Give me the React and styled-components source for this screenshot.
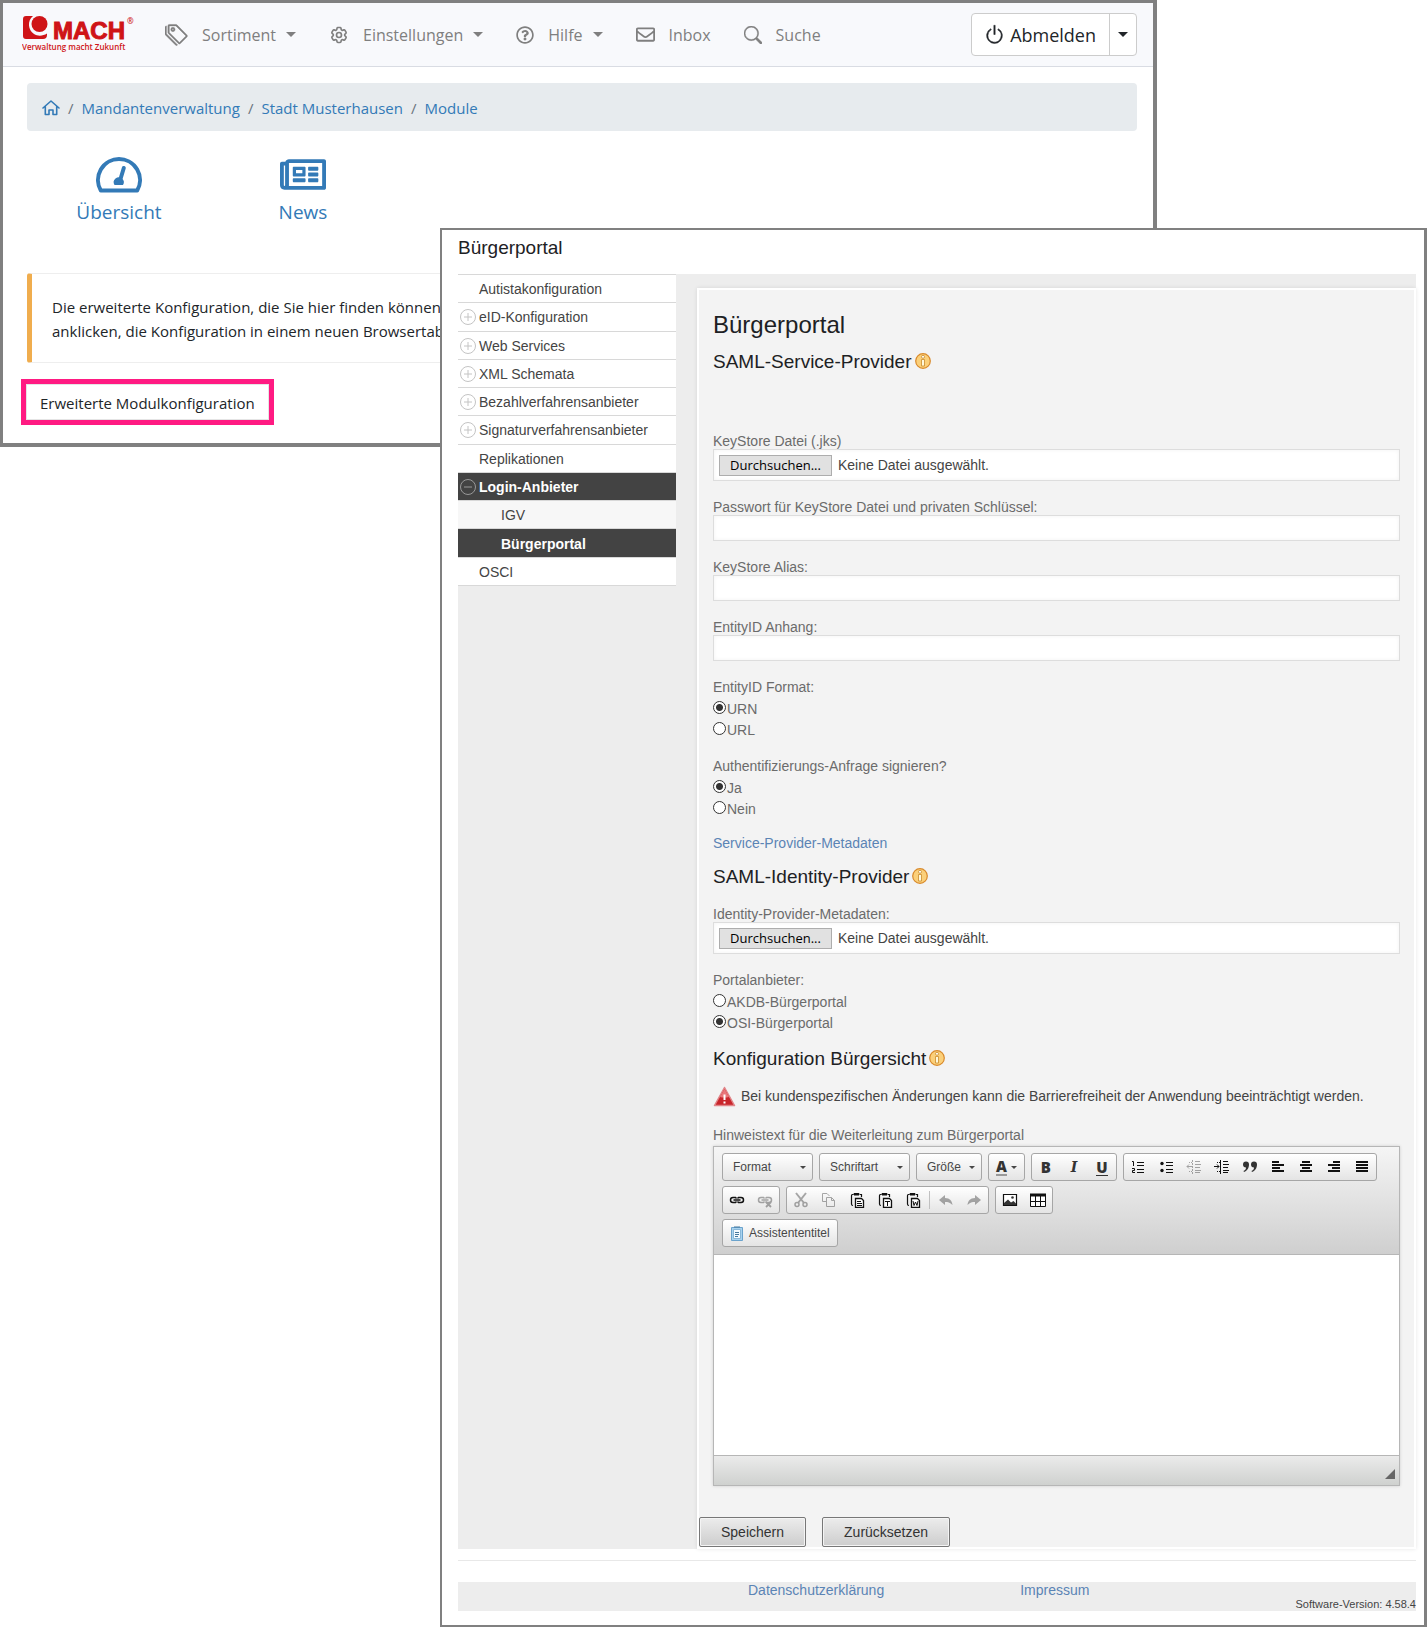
import React, { useRef, useState } from "react";
import styled, { createGlobalStyle, css } from "styled-components";
import { BsPower, BsSearch, BsTags } from "react-icons/bs";
import { FaRegEnvelope, FaRegNewspaper, FaRegQuestionCircle } from "react-icons/fa";
import { HiOutlineCog6Tooth } from "react-icons/hi2";

const uiFont = '"Open Sans", "Noto Sans", sans-serif';
const formFont = '"Liberation Sans", Arial, sans-serif';

const GlobalStyle = createGlobalStyle`
  *, *::before, *::after {
    box-sizing: border-box;
  }

  body {
    margin: 0;
    background: #fff;
  }

  button, input, select, textarea {
    font: inherit;
    color: inherit;
  }

  a {
    text-decoration: none;
  }
`;

const Desktop = styled.main`
  display: grid;
  grid-template-columns: 440px 1fr 270px 1px;
  grid-template-rows: 228px 219px auto;
`;

/* ---------- portal window ---------- */

const PortalWindow = styled.section`
  grid-column: 1 / 3;
  grid-row: 1 / 3;
  border: 3px solid #808080;
  border-right-width: 4px;
  border-bottom-width: 4px;
  background: #fff;
  color: #212529;
  font: 15px/24px ${uiFont};
  overflow: hidden;
`;

const Navbar = styled.header`
  display: flex;
  align-items: center;
  height: 64px;
  padding: 0 16px 0 19px;
  border-bottom: 1px solid #d9dce3;
  background: #f8f9fc;
`;

const NavList = styled.nav`
  display: flex;
  flex: 1;
  gap: 33px;
  margin-left: 29px;
`;

const NavLink = styled.a`
  display: flex;
  align-items: center;
  color: #7f7f7f;
  font-size: 16px;
  line-height: 24px;
  white-space: nowrap;

  > svg:first-child {
    flex: none;
    margin-right: 14px;
  }
`;

const Caret = styled.span`
  width: 10px;
  margin-left: 10px;
  border: 5px solid transparent;
  border-top-color: currentColor;
  border-bottom: 0;
`;

const LogoutGroup = styled.div`
  display: flex;
  height: 43px;
  border: 1px solid #ccc;
  border-radius: 4px;
  background: #fff;
`;

const LogoutButton = styled.button`
  display: flex;
  align-items: center;
  gap: 5px;
  padding: 0 13px 0 12px;
  border: 0;
  background: none;
  font-size: 18px;

  & + & {
    padding: 0 8px;
    border-left: 1px solid #ccc;
  }

  & + & ${Caret} {
    margin: 0;
  }
`;

const PortalBody = styled.div`
  padding: 16px 16px 0 24px;
`;

const Breadcrumb = styled.nav`
  display: flex;
  align-items: center;
  gap: 8px;
  height: 48px;
  padding: 2px 15px 0;
  border-radius: 4px;
  background: #e7ebee;
  color: #6c757d;

  a {
    display: flex;
    color: #337ab7;
  }
`;

const Tiles = styled.div`
  display: flex;
  margin: 26px 0 47px;
`;

const Tile = styled.a`
  display: flex;
  flex-direction: column;
  align-items: center;
  gap: 6px;
  width: 184px;
  color: #337ab7;
  font-size: 19px;
  line-height: 27px;

  svg {
    width: 46px;
    height: 41px;
    margin: -3px 0 -2px;
  }
`;

const Callout = styled.p`
  margin: 0 0 21px;
  padding: 21px 20px 19px;
  border: 1px solid #eee;
  border-left: 5px solid #f0ad4e;
  border-radius: 3px;
  white-space: nowrap;
`;

const ModuleButton = styled.button`
  height: 36px;
  margin-left: -1px;
  padding: 2px 13px 0;
  border: 1px solid #e4e4e4;
  background: #fff;
  outline: 5px solid #ff1a82;
`;

/* ---------- configuration window ---------- */

const ConfigWindow = styled.section`
  grid-column: 2 / 4;
  grid-row: 2 / 4;
  padding: 6px 8px 14px 16px;
  border: 2px solid #808080;
  border-right-width: 3px;
  border-bottom-width: 3px;
  background: #fff;
  color: #6b6b6b;
  font: 14px/16px ${formFont};
`;

const WindowTitle = styled.h1`
  margin: 0 0 14px;
  color: #1d2124;
  font-size: 19px;
  font-weight: 400;
  line-height: 24px;
`;

const Workspace = styled.div`
  display: flex;
  align-items: stretch;
  background: #ededed;
`;

const SideList = styled.ul`
  display: grid;
  grid-auto-rows: 1fr;
  flex: none;
  align-self: flex-start;
  width: 218px;
  height: 312px;
  margin: 0 21px 0 0;
  padding: 0;
  border-top: 1px solid #d8d8d8;
  list-style: none;
`;

const SideItem = styled.li`
  display: flex;
  border-bottom: 1px solid #d8d8d8;
  background: ${({ $active, $child }) => ($active ? "#434343" : $child ? "#f7f7f7" : "#fff")};
`;

const SideLink = styled.a`
  display: flex;
  flex: 1;
  align-items: center;
  gap: 3px;
  padding-top: 1px;
  padding-left: ${({ $child, $toggle }) => ($child ? 43 : $toggle ? 2 : 21)}px;
  color: ${({ $active }) => ($active ? "#fff" : "#444")};
  font-weight: ${({ $active }) => ($active ? 700 : 400)};
`;

const Panel = styled.form`
  flex: 1;
  min-width: 0;
  border: 2px solid #fff;
  margin-top: 14px;
  background: #f3f3f3;
  box-shadow: 0 0 4px rgba(0, 0, 0, 0.1);
`;

const PanelBody = styled.div`
  padding: 20px 14px 0;
`;

const PageHeading = styled.h2`
  margin: 0;
  color: #1d2124;
  font-size: 24px;
  font-weight: 400;
  line-height: 30px;
`;

const SectionHeading = styled.h3`
  display: flex;
  align-items: center;
  gap: 3px;
  margin: ${({ $top }) => $top || 14}px 0 ${({ $space }) => $space || 17}px;
  color: #1d2124;
  font-size: 19px;
  font-weight: 400;
  line-height: 24px;

  svg {
    margin-bottom: 2px;
  }
`;

const Field = styled.div`
  display: flex;
  flex-direction: column;
  margin-bottom: 18px;
`;

const boxed = css`
  width: 100%;
  border: 1px solid #ddd;
  background: #fff;
  box-shadow: inset 0 0 4px rgba(0, 0, 0, 0.05);
`;

const TextInput = styled.input`
  ${boxed}
  height: 26px;
  padding: 0 5px;
`;

const FileBox = styled.div`
  ${boxed}
  display: flex;
  align-items: center;
  gap: 6px;
  height: 32px;
  padding: 0 5px;
  color: #444;
`;

const BrowseButton = styled.button`
  width: 113px;
  height: 21px;
  padding: 0;
  border: 1px solid #adadad;
  background: #e1e1e1;
  color: #000;
  font: 13px/18px ${uiFont};
`;

const RadioGroup = styled.fieldset`
  margin: 0 0 ${({ $space }) => $space || 18}px;
  padding: 0;
  border: 0;

  legend {
    margin-bottom: 3px;
    padding: 0;
  }
`;

const RadioLabel = styled.label`
  display: flex;
  align-items: center;
  gap: 1px;
  height: 21px;
`;

const Radio = styled.input`
  appearance: none;
  width: 13px;
  height: 13px;
  margin: 0 0 2px;
  border: 1px solid #333;
  border-radius: 50%;
  background: #fff;

  &:checked {
    background: radial-gradient(circle, #333 0 3px, #fff 4px);
  }
`;

const TextLink = styled.a`
  color: #5b84b5;
`;

const Warning = styled.p`
  display: flex;
  align-items: center;
  gap: 5px;
  height: 22px;
  margin: 0 0 20px;
  color: #444;
`;

const EditorLabel = styled.label`
  display: block;
  margin-bottom: 3px;
`;

const Editor = styled.div`
  border: 1px solid #b6b6b6;
  box-shadow: 0 0 3px rgba(0, 0, 0, 0.15);
`;

const Toolbar = styled.div`
  display: flex;
  flex-direction: column;
  gap: 5px;
  padding: 6px 8px 7px;
  border-bottom: 1px solid #b6b6b6;
  background: linear-gradient(#f5f5f5, #cfcfcf);
  color: #474747;
  font-size: 12px;
`;

const ToolRow = styled.div`
  display: flex;
  gap: 6px;
`;

const ToolGroup = styled.div`
  display: flex;
  align-items: center;
  height: 28px;
  border: 1px solid #a6a6a6;
  border-radius: 3px;
  background: linear-gradient(#fff, #e4e4e4);
`;

const ToolSelectBox = styled(ToolGroup)`
  width: ${({ $narrow }) => ($narrow ? 66 : 91)}px;
  padding: 0 6px 0 10px;

  select {
    flex: 1;
    min-width: 0;
    padding: 0;
    appearance: none;
    border: 0;
    background: none;
  }
`;

const ToolButton = styled.button`
  display: flex;
  align-items: center;
  justify-content: center;
  gap: 4px;
  width: ${({ $wide }) => ($wide ? "auto" : "28px")};
  height: 26px;
  padding: ${({ $wide }) => $wide || 0};
  border: 0;
  background: none;
  opacity: ${({ disabled }) => (disabled ? 0.35 : 1)};
`;

const Glyph = styled.span`
  color: #333;
  font: ${({ $italic }) => ($italic ? 'italic 700 14px/16px "DejaVu Serif", serif' : `800 15px/16px ${uiFont}`)};
  border-bottom: ${({ $rule }) => $rule || "0"};
`;

const SmallCaret = styled.span`
  border: 3px solid transparent;
  border-top-color: #474747;
  border-bottom: 0;
`;

const ToolSeparator = styled.span`
  width: 1px;
  height: 18px;
  margin: 0 2px;
  background: #c0c0c0;
`;

const EditorArea = styled.textarea`
  display: block;
  width: 100%;
  height: 200px;
  padding: 8px;
  border: 0;
  resize: none;
  background: #fff;
`;

const StatusBar = styled.div`
  display: flex;
  align-items: flex-end;
  justify-content: flex-end;
  height: 30px;
  padding: 0 4px 6px;
  border-top: 1px solid #b6b6b6;
  background: linear-gradient(#ebebeb, #cfd1cf);
`;

const Actions = styled.div`
  display: flex;
  gap: 16px;
  margin-top: 31px;
`;

const ActionButton = styled.button`
  height: 30px;
  padding: 0 21px;
  border: 1px solid #777;
  border-radius: 2px;
  background: linear-gradient(#ececec, #cdcdcd);
  box-shadow: inset 0 0 0 1px #f4f4f4;
  color: #333;
`;

const Rule = styled.hr`
  margin: 11px 0 21px;
  border: 0;
  border-top: 1px solid #e8e8e8;
`;

const Footer = styled.footer`
  background: #ededed;
`;

const FooterLinks = styled.nav`
  display: flex;
  gap: 136px;
  padding-left: 290px;
`;

const Version = styled.div`
  color: #444;
  font-size: 11px;
  line-height: 13px;
  text-align: right;
`;

/* ---------- drawings ---------- */

const Logo = () => (
    <svg width="114" height="40" viewBox="0 0 114 40" fill="#cf1417" role="img" aria-label="MACH">
        <path d="M4 1H11C5 6 6 15 12 19C16 21.500 21 21 25 18.500V20Q25 24 21 24H4Q1 24 1 21V4Q1 1 4 1Z" />
        <circle cx="17.500" cy="9" r="8" />
        <text x="31" y="24" fontFamily='"Liberation Sans", Arial, sans-serif' fontSize="24" fontWeight="700" stroke="#cf1417">MACH</text>
        <text x="105" y="9" fontFamily="Open Sans, sans-serif" fontSize="8" fontWeight="600">®</text>
        <text x="0" y="35" fontFamily="Open Sans, sans-serif" fontSize="8" fontWeight="600">Verwaltung macht Zukunft</text>
    </svg>
);

const HomeIcon = () => (
    <svg width="18" height="16" viewBox="0 0 18 16" fill="none" stroke="currentColor" strokeWidth="1.600" strokeLinejoin="round" strokeLinecap="round">
        <path d="M1 8L9 1L17 8M3.300 6.500V14.500H7V10H11V14.500H14.700V6.500" />
    </svg>
);

const GaugeIcon = () => (
    <svg viewBox="0 -3 46 41" fill="none" stroke="currentColor" strokeWidth="4">
        <path d="M4.800 33.500A21 21 0 1 1 41.200 33.500Z" strokeLinejoin="round" />
        <path d="M27.800 11L24.500 22" strokeLinecap="round" />
        <path d="M18.500 28A5 5 0 1 1 27 28Z" fill="currentColor" stroke="none" />
    </svg>
);

const ToggleIcon = ({ open }) => (
    <svg width="16" height="16" viewBox="0 0 16 16" fill="none" stroke={open ? "#999" : "#c4c4c4"}>
        <circle cx="8" cy="8" r="7.500" />
        <path d={open ? "M4 8H12" : "M4 8H12M8 4V12"} />
    </svg>
);

const InfoIcon = () => (
    <svg width="16" height="16" viewBox="0 0 16 16">
        <circle cx="8" cy="8" r="7.300" fill="#fbd07a" stroke="#d98a2b" strokeWidth="1.200" />
        <circle cx="8" cy="3.800" r="1.500" fill="#fff" stroke="#c98a2b" strokeWidth=".8" />
        <path d="M6.500 6.500H9.500V13H6.500Z" fill="#fff8dc" stroke="#c98a2b" strokeWidth=".8" />
    </svg>
);

const WarningIcon = () => (
    <svg width="23" height="21" viewBox="0 0 23 21">
        <path d="M11.500 1.500L21.500 19.500H1.500Z" fill="#c9252b" stroke="#e08488" strokeWidth="1.500" strokeLinejoin="round" />
        <path d="M11.500 3L16 11Q11 12 7 11Z" fill="#e9777b" />
        <path d="M11.500 8.500V14M11.500 15.500V17.500" stroke="#fff" strokeWidth="2" />
    </svg>
);

const Icon16 = ({ children, size = 16 }) => (
    <svg width={size} height={size} viewBox="0 0 16 16" fill="none" stroke="#111">{children}</svg>
);

const alignPaths = {
    Linksbündig: "M2 3H9M2 6H14M2 9H10M2 12H14",
    Zentriert: "M4 3H12M2 6H14M4 9H12M2 12H14",
    Rechtsbündig: "M7 3H14M2 6H14M6 9H14M2 12H14",
    Blocksatz: "M2 3H14M2 6H14M2 9H14M2 12H14",
};

const IndentIcon = ({ out }) => (
    <Icon16>
        <path d="M9 2.500H14M9 5.500H15M9 8.500H14M9 11.500H15M9 13.500H14" />
        <path d="M6.500 1V15" strokeDasharray={out ? "2 1" : undefined} />
        <path d="M3 3.500H6M3 12.500H6" strokeDasharray="1 1" />
        <path d={out ? "M1 7.500H6M3 5.500L1 7.500L3 9.500" : "M0 7.500H5M3 5.500L5 7.500L3 9.500"} />
    </Icon16>
);

const LinkIcon = ({ broken }) => (
    <Icon16>
        <path d="M7.500 9.500L6.500 10.500H4Q1.500 10.500 1.500 8T4 5.500H6.500L7.500 6.500M8.500 6.500L9.500 5.500H12Q14.500 5.500 14.500 8T12 10.500H9.500L8.500 9.500M4.500 8H11.500" strokeWidth="1.500" />
        {broken && <path d="M9 10L14 15M14 10L9 15" strokeWidth="1.800" />}
    </Icon16>
);

const ClipboardIcon = ({ children }) => (
    <Icon16>
        <path d="M4.500 2.500H3.500Q2.500 2.500 2.500 4V12Q2.500 13.500 4 13.500M11 2.500H12.500V5" strokeWidth="1.200" />
        <path d="M5 3V1.500H10V3Z" fill="#111" />
        <path d="M6.500 6.500H12.500L14.500 8.500V15.500H6.500Z" fill="#fff" strokeWidth="1.300" />
        {children}
    </Icon16>
);

const FileField = ({ id, label }) => {
    const [fileName, setFileName] = useState("Keine Datei ausgewählt.");
    const inputRef = useRef(null);

    return (
        <Field>
            <label htmlFor={id}>{label}</label>
            <FileBox>
                <BrowseButton type="button" onClick={() => inputRef.current.click()}>Durchsuchen...</BrowseButton>
                <input
                    id={id}
                    ref={inputRef}
                    type="file"
                    hidden
                    onChange={(e) => e.target.files[0] && setFileName(e.target.files[0].name)}
                />
                <span>{fileName}</span>
            </FileBox>
        </Field>
    );
};

const RadioField = ({ name, legend, options, selected, space }) => (
    <RadioGroup $space={space}>
        <legend>{legend}</legend>
        {options.map(option => (
            <RadioLabel key={option}>
                <Radio type="radio" name={name} value={option} defaultChecked={option === selected} />
                {option}
            </RadioLabel>
        ))}
    </RadioGroup>
);

const ToolSelect = ({ label, narrow }) => (
    <ToolSelectBox $narrow={narrow}>
        <select aria-label={label}>
            <option>{label}</option>
        </select>
        <SmallCaret />
    </ToolSelectBox>
);

const Tool = ({ title, ...rest }) => <ToolButton type="button" title={title} aria-label={title} {...rest} />;

const EditorToolbar = () => (
    <Toolbar>
        <ToolRow>
            <ToolSelect label="Format" />
            <ToolSelect label="Schriftart" />
            <ToolSelect label="Größe" narrow />
            <ToolGroup>
                <Tool title="Textfarbe" $wide="0 7px"><Glyph $rule="2px solid #999">A</Glyph><SmallCaret /></Tool>
            </ToolGroup>
            <ToolGroup>
                <Tool title="Fett"><Glyph>B</Glyph></Tool>
                <Tool title="Kursiv"><Glyph $italic>I</Glyph></Tool>
                <Tool title="Unterstrichen"><Glyph $rule="1px solid #333">U</Glyph></Tool>
            </ToolGroup>
            <ToolGroup>
                <Tool title="Nummerierte Liste">
                    <Icon16>
                        <path d="M7 3.500H14M7 6.500H14M7 10.500H14M7 13.500H14" />
                        <path d="M2 2.500H3.500V7M2 9.500H4.500V11.500H2.500V13.500H5" />
                    </Icon16>
                </Tool>
                <Tool title="Liste">
                    <Icon16>
                        <path d="M8 3.500H15M8 6.500H15M8 10.500H15M8 13.500H15" />
                        <circle cx="4" cy="4.500" r="1.700" fill="#111" stroke="none" />
                        <circle cx="4" cy="11.500" r="1.700" fill="#111" stroke="none" />
                    </Icon16>
                </Tool>
                <Tool title="Einzug verkleinern" disabled><IndentIcon out /></Tool>
                <Tool title="Einzug vergrößern"><IndentIcon /></Tool>
                <Tool title="Zitatblock">
                    <Icon16>
                        <path d="M1 5.500A3 3 0 1 1 7 5.500C7 9 5 12 2 13L1.500 12C3.500 11 4 10 4 8.500A3 3 0 0 1 1 5.500Z" fill="#333" stroke="none" />
                        <path d="M9 5.500A3 3 0 1 1 15 5.500C15 9 13 12 10 13L9.500 12C11.500 11 12 10 12 8.500A3 3 0 0 1 9 5.500Z" fill="#333" stroke="none" />
                    </Icon16>
                </Tool>
                {Object.entries(alignPaths).map(([title, d]) => (
                    <Tool key={title} title={title}><Icon16><path d={d} strokeWidth="2" /></Icon16></Tool>
                ))}
            </ToolGroup>
        </ToolRow>
        <ToolRow>
            <ToolGroup>
                <Tool title="Link einfügen"><LinkIcon /></Tool>
                <Tool title="Link entfernen" disabled><LinkIcon broken /></Tool>
            </ToolGroup>
            <ToolGroup>
                <Tool title="Ausschneiden" disabled>
                    <Icon16>
                        <path d="M3 1L11 11M13 1L5 11" strokeWidth="2" />
                        <circle cx="4" cy="12.500" r="2" strokeWidth="1.500" />
                        <circle cx="12" cy="12.500" r="2" strokeWidth="1.500" />
                    </Icon16>
                </Tool>
                <Tool title="Kopieren" disabled>
                    <Icon16>
                        <path d="M5 9.500H1.500V1.500H6L8.500 4" />
                        <path d="M5.500 5.500H10.500L13.500 8.500V14.500H5.500ZM10.500 5.500V8.500H13.500" />
                    </Icon16>
                </Tool>
                <Tool title="Einfügen"><ClipboardIcon><path d="M8 9.500H12M8 11.500H13M8 13.500H13" /></ClipboardIcon></Tool>
                <Tool title="Als Text einfügen"><ClipboardIcon><path d="M8 9.500H13M10.500 9V14" /></ClipboardIcon></Tool>
                <Tool title="Aus Word einfügen"><ClipboardIcon><path d="M8 9L9 13.500L10.500 10L12 13.500L13 9" /></ClipboardIcon></Tool>
                <ToolSeparator />
                <Tool title="Rückgängig" disabled>
                    <Icon16><path d="M1 8L7 3V6C12 6 14 9 14.500 13C12 10.500 10 10 7 10V13Z" fill="#111" stroke="none" /></Icon16>
                </Tool>
                <Tool title="Wiederherstellen" disabled>
                    <Icon16><path d="M15 8L9 3V6C4 6 2 9 1.500 13C4 10.500 6 10 9 10V13Z" fill="#111" stroke="none" /></Icon16>
                </Tool>
            </ToolGroup>
            <ToolGroup>
                <Tool title="Bild">
                    <Icon16>
                        <path d="M1.500 2.500H14.500V13.500H1.500Z" fill="#fff" strokeWidth="1.200" />
                        <path d="M2 13V11L6 7.500L9 10.500L11.500 9L14 11.500V13Z" fill="#333" stroke="none" />
                        <circle cx="10.500" cy="5.500" r="1.300" fill="#333" stroke="none" />
                    </Icon16>
                </Tool>
                <Tool title="Tabelle">
                    <Icon16>
                        <path d="M.5 2.500H15.500V14.500H.5ZM5.500 4V14M10.500 4V14M1 9.500H15" fill="#fff" />
                        <path d="M0 3H16" strokeWidth="3" />
                    </Icon16>
                </Tool>
            </ToolGroup>
        </ToolRow>
        <ToolRow>
            <ToolGroup>
                <ToolButton type="button" $wide="0 7px 0 6px">
                    <Icon16>
                        <path d="M2.500 2.500H13.500V15.500H2.500Z" fill="#a9d3ef" stroke="#6ba3cc" />
                        <path d="M4.500 4.500H11.500V13.500H4.500Z" fill="#f3faff" stroke="#8ab8d9" />
                        <path d="M5 2H11M6 7.500H10M6 9.500H10M6 11.500H9" stroke="#44789e" />
                    </Icon16>
                    Assistententitel
                </ToolButton>
            </ToolGroup>
        </ToolRow>
    </Toolbar>
);

const sideItems = [
    { label: "Autistakonfiguration" },
    { label: "eID-Konfiguration", toggle: true },
    { label: "Web Services", toggle: true },
    { label: "XML Schemata", toggle: true },
    { label: "Bezahlverfahrensanbieter", toggle: true },
    { label: "Signaturverfahrensanbieter", toggle: true },
    { label: "Replikationen" },
    { label: "Login-Anbieter", toggle: true, active: true },
    { label: "IGV", child: true },
    { label: "Bürgerportal", child: true, active: true },
    { label: "OSCI" },
];

const navItems = [
    { label: "Sortiment", icon: <BsTags size={23} strokeWidth={0.3} />, menu: true },
    { label: "Einstellungen", icon: <HiOutlineCog6Tooth size={20} strokeWidth={2} />, menu: true },
    { label: "Hilfe", icon: <FaRegQuestionCircle size={18} />, menu: true },
    { label: "Inbox", icon: <FaRegEnvelope size={19} /> },
    { label: "Suche", icon: <BsSearch size={18} strokeWidth={0.4} /> },
];

const crumbs = ["Mandantenverwaltung", "Stadt Musterhausen", "Module"];

const Portal = () => (
    <PortalWindow>
        <Navbar>
            <Logo />
            <NavList>
                {navItems.map(({ label, icon, menu }) => (
                    <NavLink key={label} href="#">
                        {icon}
                        {label}
                        {menu && <Caret />}
                    </NavLink>
                ))}
            </NavList>
            <LogoutGroup>
                <LogoutButton type="button"><BsPower size={21} strokeWidth={0.4} />Abmelden</LogoutButton>
                <LogoutButton type="button" aria-label="Weitere Optionen"><Caret /></LogoutButton>
            </LogoutGroup>
        </Navbar>
        <PortalBody>
            <Breadcrumb>
                <a href="#" aria-label="Startseite"><HomeIcon /></a>
                {crumbs.map(crumb => (
                    <React.Fragment key={crumb}>
                        <span>/</span>
                        <a href="#">{crumb}</a>
                    </React.Fragment>
                ))}
            </Breadcrumb>
            <Tiles>
                <Tile href="#"><GaugeIcon />Übersicht</Tile>
                <Tile href="#"><FaRegNewspaper />News</Tile>
            </Tiles>
            <Callout>
                Die erweiterte Konfiguration, die Sie hier finden können<br />
                anklicken, die Konfiguration in einem neuen Browsertab
            </Callout>
            <ModuleButton type="button">Erweiterte Modulkonfiguration</ModuleButton>
        </PortalBody>
    </PortalWindow>
);

const Configuration = () => (
    <ConfigWindow>
        <WindowTitle>Bürgerportal</WindowTitle>
        <Workspace>
            <SideList>
                {sideItems.map(({ label, toggle, active, child }) => (
                    <SideItem key={label} $active={active} $child={child}>
                        <SideLink href="#" $active={active} $child={child} $toggle={toggle}>
                            {toggle && <ToggleIcon open={active} />}
                            {label}
                        </SideLink>
                    </SideItem>
                ))}
            </SideList>
            <Panel>
                <PanelBody>
                    <PageHeading>Bürgerportal</PageHeading>
                    <SectionHeading $top={10} $space={59}>SAML-Service-Provider<InfoIcon /></SectionHeading>
                    <FileField id="keystore" label="KeyStore Datei (.jks)" />
                    <Field>
                        <label htmlFor="password">Passwort für KeyStore Datei und privaten Schlüssel:</label>
                        <TextInput id="password" type="password" />
                    </Field>
                    <Field>
                        <label htmlFor="alias">KeyStore Alias:</label>
                        <TextInput id="alias" />
                    </Field>
                    <Field>
                        <label htmlFor="entity">EntityID Anhang:</label>
                        <TextInput id="entity" />
                    </Field>
                    <RadioField name="format" legend="EntityID Format:" options={["URN", "URL"]} selected="URN" />
                    <RadioField name="sign" legend="Authentifizierungs-Anfrage signieren?" options={["Ja", "Nein"]} selected="Ja" space={16} />
                    <TextLink href="#">Service-Provider-Metadaten</TextLink>
                    <SectionHeading>SAML-Identity-Provider<InfoIcon /></SectionHeading>
                    <FileField id="metadata" label="Identity-Provider-Metadaten:" />
                    <RadioField name="provider" legend="Portalanbieter:" options={["AKDB-Bürgerportal", "OSI-Bürgerportal"]} selected="OSI-Bürgerportal" space={14} />
                    <SectionHeading $space={14}>Konfiguration Bürgersicht<InfoIcon /></SectionHeading>
                    <Warning>
                        <WarningIcon />
                        Bei kundenspezifischen Änderungen kann die Barrierefreiheit der Anwendung beeinträchtigt werden.
                    </Warning>
                    <EditorLabel htmlFor="hint">Hinweistext für die Weiterleitung zum Bürgerportal</EditorLabel>
                    <Editor>
                        <EditorToolbar />
                        <EditorArea id="hint" />
                        <StatusBar>
                            <svg width="10" height="10" viewBox="0 0 10 10"><path d="M10 0V10H0Z" fill="#666" /></svg>
                        </StatusBar>
                    </Editor>
                </PanelBody>
                <Actions>
                    <ActionButton type="submit">Speichern</ActionButton>
                    <ActionButton type="reset">Zurücksetzen</ActionButton>
                </Actions>
            </Panel>
        </Workspace>
        <Rule />
        <Footer>
            <FooterLinks>
                <TextLink href="#">Datenschutzerklärung</TextLink>
                <TextLink href="#">Impressum</TextLink>
            </FooterLinks>
            <Version>Software-Version: 4.58.4</Version>
        </Footer>
    </ConfigWindow>
);

const App = () => (
    <>
        <GlobalStyle />
        <Desktop>
            <Portal />
            <Configuration />
        </Desktop>
    </>
);

export default App;
